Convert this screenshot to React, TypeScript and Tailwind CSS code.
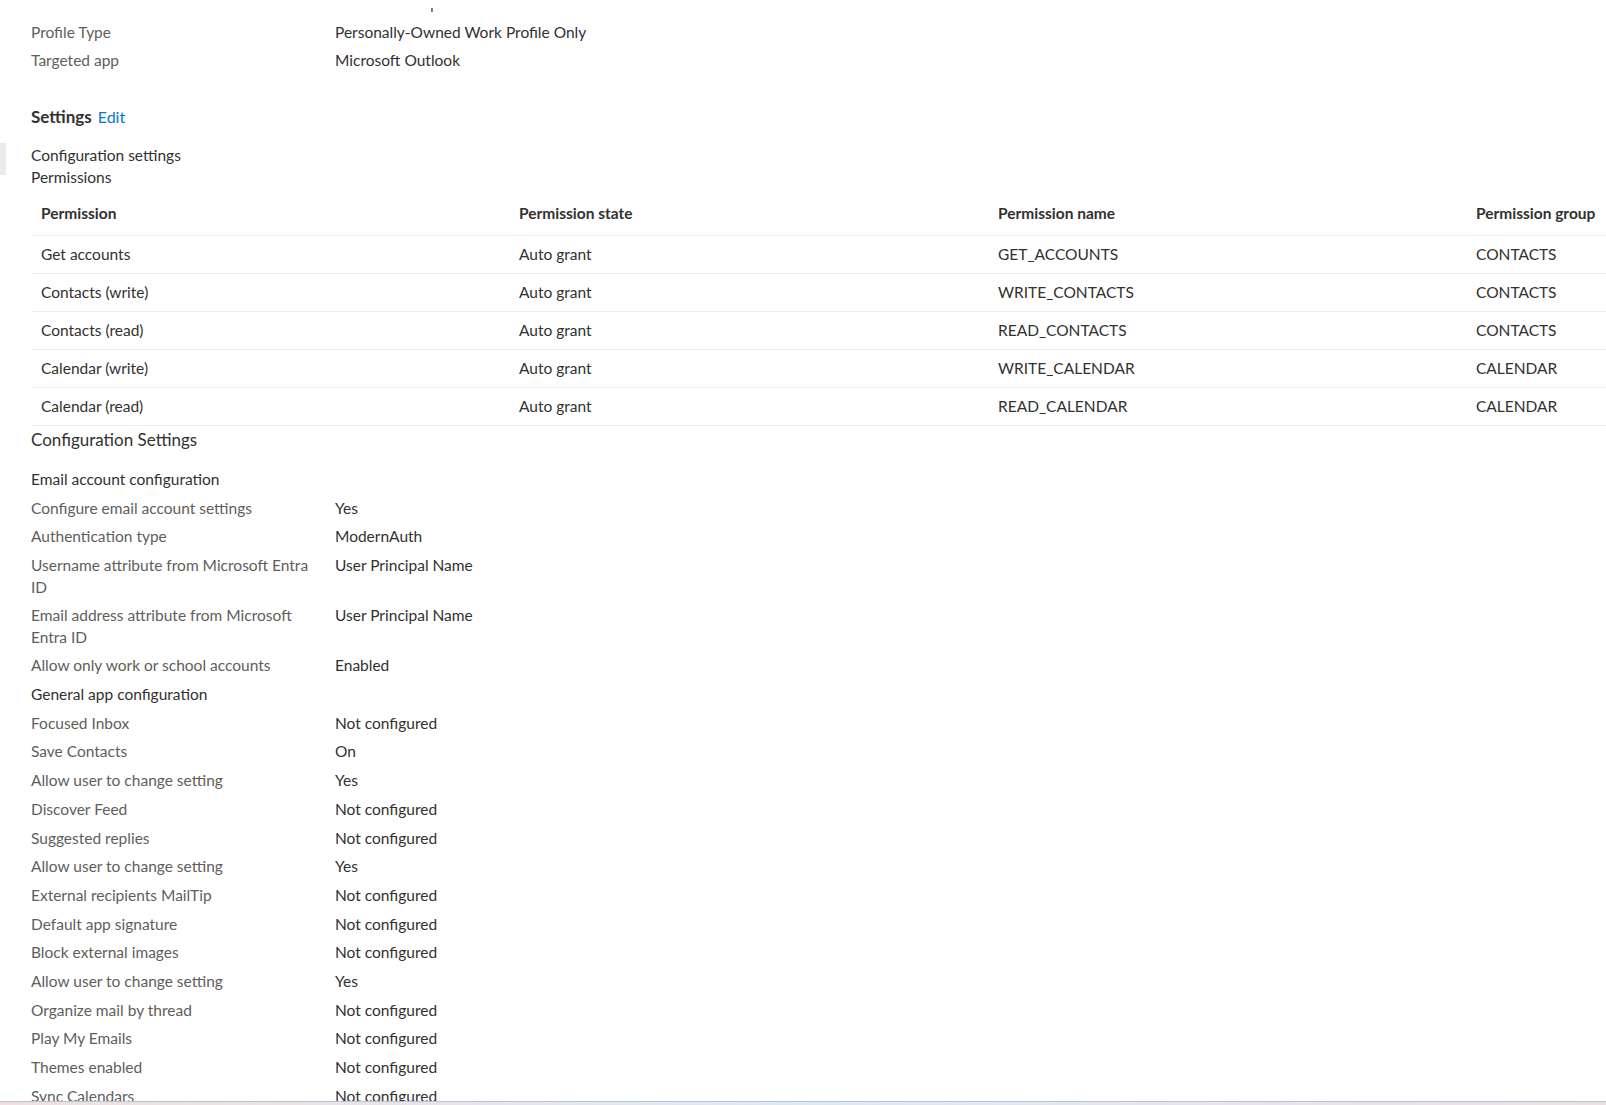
// ── Data ───────────────────────────────────────────────────────────────────
type Row = { label: string; value?: string; heading?: boolean }

const permissions = [
  ['Get accounts', 'Auto grant', 'GET_ACCOUNTS', 'CONTACTS'],
  ['Contacts (write)', 'Auto grant', 'WRITE_CONTACTS', 'CONTACTS'],
  ['Contacts (read)', 'Auto grant', 'READ_CONTACTS', 'CONTACTS'],
  ['Calendar (write)', 'Auto grant', 'WRITE_CALENDAR', 'CALENDAR'],
  ['Calendar (read)', 'Auto grant', 'READ_CALENDAR', 'CALENDAR'],
]

const configRows: Row[] = [
  { label: 'Email account configuration', heading: true },
  { label: 'Configure email account settings', value: 'Yes' },
  { label: 'Authentication type', value: 'ModernAuth' },
  { label: 'Username attribute from Microsoft Entra ID', value: 'User Principal Name' },
  { label: 'Email address attribute from Microsoft Entra ID', value: 'User Principal Name' },
  { label: 'Allow only work or school accounts', value: 'Enabled' },
  { label: 'General app configuration', heading: true },
  { label: 'Focused Inbox', value: 'Not configured' },
  { label: 'Save Contacts', value: 'On' },
  { label: 'Allow user to change setting', value: 'Yes' },
  { label: 'Discover Feed', value: 'Not configured' },
  { label: 'Suggested replies', value: 'Not configured' },
  { label: 'Allow user to change setting', value: 'Yes' },
  { label: 'External recipients MailTip', value: 'Not configured' },
  { label: 'Default app signature', value: 'Not configured' },
  { label: 'Block external images', value: 'Not configured' },
  { label: 'Allow user to change setting', value: 'Yes' },
  { label: 'Organize mail by thread', value: 'Not configured' },
  { label: 'Play My Emails', value: 'Not configured' },
  { label: 'Themes enabled', value: 'Not configured' },
  { label: 'Sync Calendars', value: 'Not configured' },
]

// ── PropRow ────────────────────────────────────────────────────────────────
function PropRow({ row }: { row: Row }) {
  if (row.heading) {
    return <div className="py-[3.6px] leading-[21.5px] text-[#323130]">{row.label}</div>
  }
  return (
    <div className="grid grid-cols-[304px_1fr] py-[3.6px] leading-[21.5px]">
      <div className="pr-[14px] text-[#605e5c]">{row.label}</div>
      <div className="text-[#323130]">{row.value}</div>
    </div>
  )
}

// ── PermissionsTable ───────────────────────────────────────────────────────
function PermissionsTable() {
  const cols = 'grid grid-cols-[478px_479px_478px_140px]'
  return (
    <div className="w-[1575px]">
      <div className={`${cols} h-[48px] items-center border-b border-[#edebe9] pt-[3px] font-bold text-[#323130]`}>
        <div className="pl-[10px]">Permission</div>
        <div className="pl-[10px]">Permission state</div>
        <div className="pl-[10px]">Permission name</div>
        <div className="whitespace-nowrap pl-[10px]">Permission group</div>
      </div>
      {permissions.map((p, i) => (
        <div key={i} className={`${cols} h-[38px] items-center border-b border-[#edebe9] text-[#323130]`}>
          {p.map((c, j) => (
            <div key={j} className="pl-[10px]">
              {c}
            </div>
          ))}
        </div>
      ))}
    </div>
  )
}

// ── App ────────────────────────────────────────────────────────────────────
export default function App() {
  return (
    <div className="relative flex h-[1105px] w-[1606px] flex-col overflow-hidden bg-white font-['Lato',sans-serif] text-[15.5px]">
      {/* stray caret mark at the top */}
      <span className="absolute left-[431px] top-[8px] h-[4px] w-[2px] bg-gradient-to-r from-[#3a6fb0] to-[#c07a3a]" />
      {/* scroll indicator on the left edge */}
      <span className="absolute left-0 top-[143px] h-[32px] w-[6px] bg-[#edebe9]" />

      <div className="flex-1 overflow-hidden pl-[31px] pt-[18px]">
        {/* Basics */}
        <PropRow row={{ label: 'Profile Type', value: 'Personally-Owned Work Profile Only' }} />
        <PropRow row={{ label: 'Targeted app', value: 'Microsoft Outlook' }} />

        {/* Settings */}
        <div className="mt-[30px] flex items-baseline gap-[6px] leading-[24px]">
          <span className="text-[17px] font-bold text-[#323130]">Settings</span>
          <span className="text-[16px] text-[#0078d4]">Edit</span>
        </div>

        <div className="mt-[15px] leading-[22px] text-[#323130]">
          <div>Configuration settings</div>
          <div>Permissions</div>
        </div>

        <PermissionsTable />

        <div className="pt-[1px] leading-[26px] text-[17px] text-[#323130]">Configuration Settings</div>

        <div className="mt-[12px]">
          {configRows.map((r, i) => (
            <PropRow key={i} row={r} />
          ))}
        </div>
      </div>

      {/* bottom edge */}
      <div className="h-[4px] border-t border-[#b3c5d6] bg-gradient-to-r from-[#f3dede] via-[#dde8f3] to-[#efdfe4]" />
    </div>
  )
}
